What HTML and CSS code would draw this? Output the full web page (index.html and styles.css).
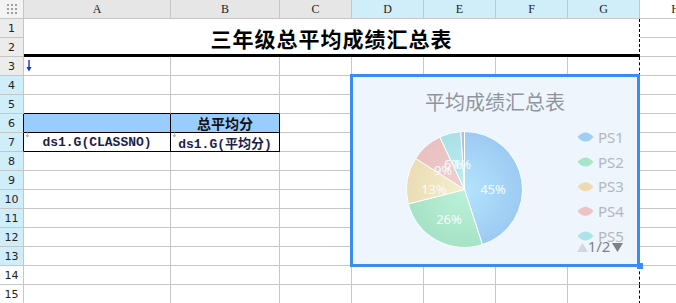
FILE: index.html
```html
<!DOCTYPE html>
<html lang="zh-CN">

<head>
  <meta charset="UTF-8" />
  <title>三年级总平均成绩汇总表</title>
  <link rel="stylesheet" href="styles.css">
</head>

<body>
  <div class="wrap">
    <div class="sheet">
      <!-- column headers -->
      <div class="corner">
        <svg width="10" height="10" viewBox="0 0 10 10">
          <g fill="#a0a0a0">
            <rect x="0" y="0" width="2" height="2" /><rect x="4" y="0" width="2" height="2" /><rect x="8" y="0" width="2" height="2" />
            <rect x="0" y="4" width="2" height="2" /><rect x="4" y="4" width="2" height="2" /><rect x="8" y="4" width="2" height="2" />
            <rect x="0" y="8" width="2" height="2" /><rect x="4" y="8" width="2" height="2" /><rect x="8" y="8" width="2" height="2" />
          </g>
        </svg>
      </div>
      <div class="colhead">A</div>
      <div class="colhead">B</div>
      <div class="colhead">C</div>
      <div class="colhead sel">D</div>
      <div class="colhead sel">E</div>
      <div class="colhead sel">F</div>
      <div class="colhead sel">G</div>
      <div class="colhead plain">H</div>

      <!-- rows 1-2 : merged title -->
      <div class="rowhead">1</div>
      <div class="title">三年级总平均成绩汇总表</div>
      <div class="cell"></div>
      <div class="rowhead">2</div>
      <div class="cell"></div>

      <!-- row 3 -->
      <div class="rowhead">3</div>
      <div class="cell">
        <svg class="expand" width="6" height="12" viewBox="0 0 6 12">
          <path d="M3 0 V10" stroke="#1030e0" stroke-width="1.4" />
          <path d="M0.5 7 L3 11.5 L5.5 7 Z" fill="#1030e0" />
        </svg>
      </div>
      <div class="cell"></div><div class="cell"></div><div class="cell"></div><div class="cell"></div><div class="cell"></div>
      <div class="cell pb"></div><div class="cell"></div>

      <!-- row 4 -->
      <div class="rowhead sel">4</div>
      <div class="cell"></div><div class="cell"></div><div class="cell"></div><div class="cell"></div><div class="cell"></div><div class="cell"></div>
      <div class="cell pb"></div><div class="cell"></div>

      <!-- row 5 -->
      <div class="rowhead sel">5</div>
      <div class="cell edge-b"></div><div class="cell edge-b"></div><div class="cell"></div><div class="cell"></div><div class="cell"></div><div class="cell"></div>
      <div class="cell pb"></div><div class="cell"></div>

      <!-- row 6 -->
      <div class="rowhead sel edge-r">6</div>
      <div class="cell box head"></div>
      <div class="cell box head">总平均分</div>
      <div class="cell"></div><div class="cell"></div><div class="cell"></div><div class="cell"></div>
      <div class="cell pb"></div><div class="cell"></div>

      <!-- row 7 -->
      <div class="rowhead sel edge-r">7</div>
      <div class="cell box data"><span class="mark">↓</span>ds1.G(CLASSNO)</div>
      <div class="cell box data"><span class="mark">↓</span>ds1.G(平均分)</div>
      <div class="cell"></div><div class="cell"></div><div class="cell"></div><div class="cell"></div>
      <div class="cell pb"></div><div class="cell"></div>

      <!-- rows 8-15 -->
      <div class="rowhead sel">8</div>
      <div class="cell"></div><div class="cell"></div><div class="cell"></div><div class="cell"></div><div class="cell"></div><div class="cell"></div>
      <div class="cell pb"></div><div class="cell"></div>
      <div class="rowhead sel">9</div>
      <div class="cell"></div><div class="cell"></div><div class="cell"></div><div class="cell"></div><div class="cell"></div><div class="cell"></div>
      <div class="cell pb"></div><div class="cell"></div>
      <div class="rowhead sel">10</div>
      <div class="cell"></div><div class="cell"></div><div class="cell"></div><div class="cell"></div><div class="cell"></div><div class="cell"></div>
      <div class="cell pb"></div><div class="cell"></div>
      <div class="rowhead sel">11</div>
      <div class="cell"></div><div class="cell"></div><div class="cell"></div><div class="cell"></div><div class="cell"></div><div class="cell"></div>
      <div class="cell pb"></div><div class="cell"></div>
      <div class="rowhead sel">12</div>
      <div class="cell"></div><div class="cell"></div><div class="cell"></div><div class="cell"></div><div class="cell"></div><div class="cell"></div>
      <div class="cell pb"></div><div class="cell"></div>
      <div class="rowhead sel">13</div>
      <div class="cell"></div><div class="cell"></div><div class="cell"></div><div class="cell"></div><div class="cell"></div><div class="cell"></div>
      <div class="cell pb"></div><div class="cell"></div>
      <div class="rowhead plain">14</div>
      <div class="cell"></div><div class="cell"></div><div class="cell"></div><div class="cell"></div><div class="cell"></div><div class="cell"></div>
      <div class="cell pb"></div><div class="cell"></div>
      <div class="rowhead plain">15</div>
      <div class="cell"></div><div class="cell"></div><div class="cell"></div><div class="cell"></div><div class="cell"></div><div class="cell"></div>
      <div class="cell pb"></div><div class="cell"></div>
    </div>

    <!-- floating chart over D4:G13 -->
    <div class="chart">
      <svg width="284" height="187" viewBox="0 0 284 187">
        <defs>
          <radialGradient id="g1" gradientUnits="userSpaceOnUse" cx="111.5" cy="112.5" r="58">
            <stop offset="0" stop-color="#b4e4fd" /><stop offset="1" stop-color="#9ccaf3" />
          </radialGradient>
          <radialGradient id="g2" gradientUnits="userSpaceOnUse" cx="111.5" cy="112.5" r="58">
            <stop offset="0" stop-color="#bbf2da" /><stop offset="1" stop-color="#a6e2c5" />
          </radialGradient>
          <radialGradient id="g3" gradientUnits="userSpaceOnUse" cx="111.5" cy="112.5" r="58">
            <stop offset="0" stop-color="#f4efcd" /><stop offset="1" stop-color="#ebddb5" />
          </radialGradient>
          <radialGradient id="g4" gradientUnits="userSpaceOnUse" cx="111.5" cy="112.5" r="58">
            <stop offset="0" stop-color="#f2d0d0" /><stop offset="1" stop-color="#e8c0c0" />
          </radialGradient>
          <radialGradient id="g5" gradientUnits="userSpaceOnUse" cx="111.5" cy="112.5" r="58">
            <stop offset="0" stop-color="#bdeef4" /><stop offset="1" stop-color="#a9e0e6" />
          </radialGradient>
        </defs>

        <text class="chart-title" x="142" y="33" text-anchor="middle">平均成绩汇总表</text>

        <g stroke="#ffffff" stroke-width="1" stroke-linejoin="round">
          <path fill="url(#g1)" d="M111.5 112.5 L111.5 54.5 A58 58 0 0 1 129.42 167.66 Z" />
          <path fill="url(#g2)" d="M111.5 112.5 L129.42 167.66 A58 58 0 0 1 55.32 126.93 Z" />
          <path fill="url(#g3)" d="M111.5 112.5 L55.32 126.93 A58 58 0 0 1 62.53 81.42 Z" />
          <path fill="url(#g4)" d="M111.5 112.5 L62.53 81.42 A58 58 0 0 1 86.80 60.02 Z" />
          <path fill="url(#g5)" d="M111.5 112.5 L86.80 60.02 A58 58 0 0 1 107.86 54.62 Z" />
          <path fill="#b6badb" d="M111.5 112.5 L107.86 54.62 A58 58 0 0 1 111.5 54.5 Z" />
        </g>

        <g class="pct" text-anchor="middle">
          <text x="140" y="117">45%</text>
          <text x="96" y="147">26%</text>
          <text x="81" y="117">13%</text>
          <text x="90" y="98">9%</text>
          <text x="100" y="92">6%</text>
          <text x="109" y="92">1%</text>
        </g>

        <g class="legend">
          <path fill="#9fcff6" d="M224.5 60 Q228.5 55.5 232.5 55.5 Q236.5 55.5 240.5 60 Q236.5 64.5 232.5 64.5 Q228.5 64.5 224.5 60 Z" />
          <text x="245" y="65.5">PS1</text>
          <path fill="#a6e5c6" d="M224.5 85 Q228.5 80.5 232.5 80.5 Q236.5 80.5 240.5 85 Q236.5 89.5 232.5 89.5 Q228.5 89.5 224.5 85 Z" />
          <text x="245" y="90.5">PS2</text>
          <path fill="#eedab2" d="M224.5 109.7 Q228.5 105.2 232.5 105.2 Q236.5 105.2 240.5 109.7 Q236.5 114.2 232.5 114.2 Q228.5 114.2 224.5 109.7 Z" />
          <text x="245" y="115.2">PS3</text>
          <path fill="#eec2c2" d="M224.5 134.3 Q228.5 129.8 232.5 129.8 Q236.5 129.8 240.5 134.3 Q236.5 138.8 232.5 138.8 Q228.5 138.8 224.5 134.3 Z" />
          <text x="245" y="139.8">PS4</text>
          <path fill="#ade4e9" d="M224.5 159 Q228.5 154.5 232.5 154.5 Q236.5 154.5 240.5 159 Q236.5 163.5 232.5 163.5 Q228.5 163.5 224.5 159 Z" />
          <text x="245" y="164.5">PS5</text>
        </g>

        <path fill="#d3d8de" d="M224 175 L229.5 166 L235 175 Z" />
        <text class="pager" x="246" y="175" text-anchor="middle">1/2</text>
        <path fill="#7b818a" d="M259 166 L270 166 L264.5 175 Z" />
      </svg>
      <span class="handle"></span>
    </div>
  </div>
</body>

</html>
```

FILE: styles.css
```css
body {
  margin: 0;
  overflow: hidden;
  background: #fff;
  font-family: 'Liberation Sans', 'Noto Sans CJK SC', sans-serif;
}

.wrap {
  position: relative;
  width: 676px;
  height: 303px;
  overflow: hidden;
}

.sheet {
  display: grid;
  grid-template-columns: 24px 147px 109px 72px 72px 72px 72px 72px 72px;
  grid-template-rows: repeat(16, 19px);
  width: 712px;
}

.sheet > div {
  box-sizing: border-box;
  border-right: 1px solid #c6c6c6;
  border-bottom: 1px solid #c6c6c6;
}

.corner {
  background: #f3f3f3;
  display: flex;
  align-items: center;
  justify-content: center;
}

.colhead {
  background: #e6e6e6;
  color: #222;
  font-family: 'Liberation Serif', serif;
  font-size: 12px;
  display: flex;
  align-items: center;
  justify-content: center;
}

.rowhead {
  background: #ececec;
  color: #222;
  font-family: 'DejaVu Sans', sans-serif;
  font-size: 11px;
  display: flex;
  align-items: center;
  justify-content: center;
}

.colhead.sel,
.rowhead.sel {
  background: #cfeefa;
}

.colhead.plain,
.rowhead.plain {
  background: #fff;
}

.cell {
  position: relative;
  background: #fff;
}

.sheet > .pb {
  border-right: 1px dashed #000;
}

.title {
  grid-column: span 7;
  grid-row: span 2;
  display: flex;
  align-items: center;
  justify-content: center;
  padding-top: 3px;
  font-family: 'Noto Sans CJK SC', sans-serif;
  font-weight: 700;
  font-size: 21px;
  letter-spacing: 1px;
  color: #000;
  background: #fff;
}

.sheet > .title {
  border-bottom: 3px solid #000;
  border-right: 1px dashed #000;
}

.expand {
  position: absolute;
  left: 2px;
  top: 3px;
}

.sheet > .edge-b {
  border-bottom-color: #000;
}

.sheet > .edge-r {
  border-right-color: #000;
}

.sheet > .box {
  border-right-color: #000;
  border-bottom-color: #000;
}

.head {
  background: #99ccff;
  display: flex;
  align-items: center;
  justify-content: center;
  font-family: 'Noto Sans CJK SC', sans-serif;
  font-weight: 700;
  font-size: 14px;
  color: #111;
}

.data {
  display: flex;
  align-items: center;
  justify-content: center;
  font-family: 'Liberation Mono', 'Noto Sans CJK SC', monospace;
  font-weight: 700;
  font-size: 13px;
  color: #1d1d48;
}

.mark {
  position: absolute;
  left: 0;
  top: -3px;
  font-family: 'DejaVu Sans', sans-serif;
  font-weight: 400;
  font-size: 8px;
  color: #9a9a9a;
}

.chart {
  position: absolute;
  left: 350px;
  top: 74px;
  width: 284px;
  height: 187px;
  border: 3px solid #3b8cf0;
  background: #eef5fd;
}

.chart svg {
  display: block;
}

.chart-title {
  font-family: 'Noto Sans CJK SC', sans-serif;
  font-size: 20px;
  font-weight: 400;
  fill: #8e959d;
}

.pct {
  font-family: 'Noto Sans', sans-serif;
  font-size: 13px;
  fill: #f7fbff;
}

.legend text {
  font-family: 'Noto Sans', sans-serif;
  font-size: 15px;
  fill: #b3b8bf;
}

.pager {
  font-family: 'Noto Sans', sans-serif;
  font-size: 15px;
  fill: #7d838c;
}

.handle {
  position: absolute;
  right: -6px;
  bottom: -5px;
  width: 6px;
  height: 6px;
  background: #3b8cf0;
}
```
